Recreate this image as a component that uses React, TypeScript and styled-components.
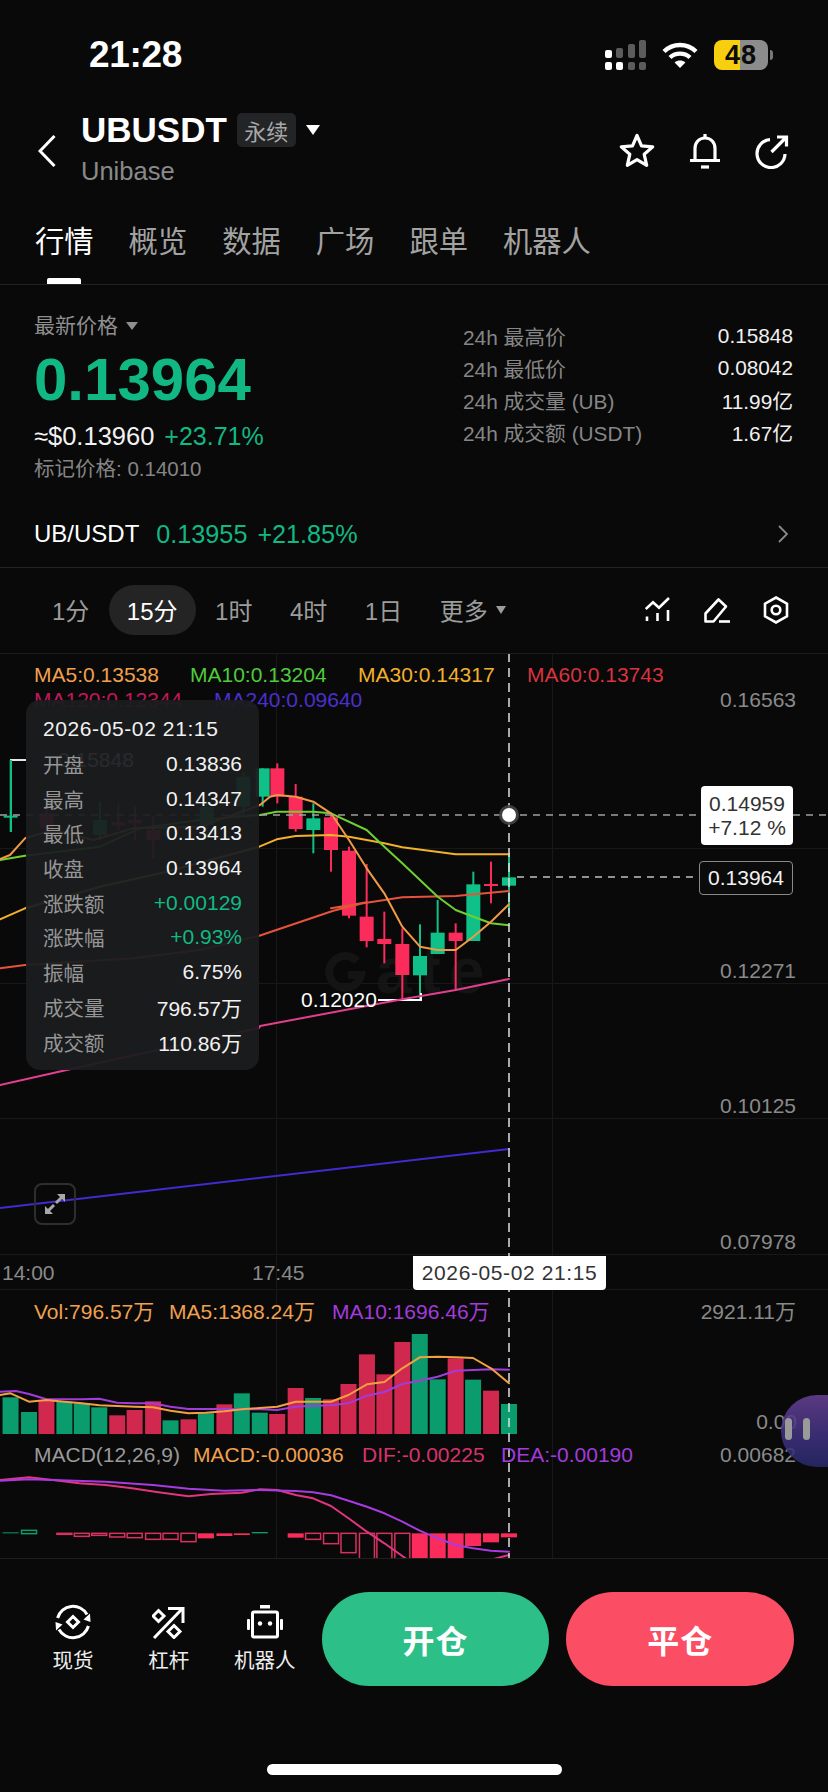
import React from "react";
import styled, { createGlobalStyle } from "styled-components";

const FONT = `"Liberation Sans", "Noto Sans CJK SC", sans-serif`;
const GREEN = "#12b883";
const GRAY = "#8f8f8f";

const Global = createGlobalStyle`
  html, body { margin: 0; padding: 0; background: #090909; }
  * { box-sizing: border-box; }
`;

const Page = styled.div`
  width: 828px; height: 1792px; background: #090909; color: #fff;
  font-family: ${FONT}; display: flex; flex-direction: column; overflow: hidden;
`;

/* status bar */
const StatusBar = styled.div`
  height: 100px; padding: 10px 55px 0 89px; display: flex; align-items: center; justify-content: space-between;
`;
const Clock = styled.div`font-size: 37px; font-weight: 700; letter-spacing: -0.3px; line-height: 40px;`;
const StatusIcons = styled.div`display: flex; align-items: center; gap: 16px;`;
const Battery = styled.div`
  position: relative; width: 54px; height: 30px; border-radius: 8px; overflow: hidden;
  background: linear-gradient(90deg, #f7cf0f 0 48%, #8c8c8c 48% 100%);
  color: #0b0b0b; font-size: 27px; font-weight: 700; display: flex; align-items: center; justify-content: center;
  line-height: 30px; letter-spacing: 1px;
`;
const BatteryWrap = styled.div`display: flex; align-items: center; gap: 2px;`;
const BatteryCap = styled.div`width: 3px; height: 10px; border-radius: 0 3px 3px 0; background: #777;`;

/* header */
const Header = styled.div`
  height: 100px; padding: 10px 38px 8px 38px; display: flex; align-items: center;
`;
const TitleCol = styled.div`margin-left: 25px; display: flex; flex-direction: column; flex: 1;`;
const TitleRow = styled.div`height: 40px; display: flex; align-items: center;`;
const Symbol = styled.div`font-size: 35px; font-weight: 700; line-height: 40px;`;
const Tag = styled.div`
  margin-left: 10px; width: 59px; height: 34px; border-radius: 5px; background: #232426; color: #a8a8a8;
  font-size: 22px; display: flex; align-items: center; justify-content: center;
`;
const Caret = styled.div<{ $w: number; $h: number; $c: string; $ml: number }>`
  margin-left: ${p => p.$ml}px; width: 0; height: 0; flex: none;
  border-left: ${p => p.$w / 2}px solid transparent; border-right: ${p => p.$w / 2}px solid transparent;
  border-top: ${p => p.$h}px solid ${p => p.$c};
`;
const SubName = styled.div`font-size: 25.5px; color: #8a8a8a; height: 42px; line-height: 42px;`;
const HeaderIcons = styled.div`display: flex; align-items: center; gap: 33.5px;`;

/* tabs */
const Tabs = styled.div`
  height: 85px; padding: 21px 0 0 35px; display: flex; gap: 35px; align-items: flex-start;
  border-bottom: 1px solid #222;
`;
const Tab = styled.div<{ $active?: boolean }>`
  position: relative; height: 63px; font-size: 29.3px; line-height: 42px;
  color: ${p => (p.$active ? "#fff" : "#a2a2a2")};
  ${p => p.$active ? `&::after { content: ""; position: absolute; left: 12px; bottom: 0; width: 34px; height: 6px; background: #fff; border-radius: 2px 2px 0 0; }` : ""}
`;

/* price */
const PriceSection = styled.div`height: 216px; display: flex; justify-content: space-between;`;
const PriceLeft = styled.div`padding: 29px 0 0 34px; display: flex; flex-direction: column;`;
const PriceKind = styled.div`height: 24px; font-size: 21px; line-height: 24px; color: ${GRAY}; display: flex; align-items: center;`;
const LastPrice = styled.div`margin-top: 12px; font-size: 60px; font-weight: 700; line-height: 60px; color: ${GREEN};`;
const UsdRow = styled.div`margin-top: 11px; height: 30px; line-height: 30px; font-size: 25.5px; display: flex; gap: 10px; color: #f2f2f2;`;
const UsdChange = styled.span`color: ${GREEN}; font-size: 25px;`;
const MarkPrice = styled.div`margin-top: 6px; height: 24px; line-height: 24px; font-size: 20.5px; color: #858585;`;
const Stats = styled.div`padding: 35px 35px 0 0; margin-left: auto; width: 365px;`;
const StatRow = styled.div`height: 32px; display: flex; justify-content: space-between; align-items: center; font-size: 20.8px;`;
const StatLabel = styled.span`color: #868686;`;
const StatValue = styled.span`color: #f0f0f0;`;

/* spot row */
const SpotRow = styled.div`
  height: 67px; padding: 0 40px 0 34px; display: flex; align-items: center; border-bottom: 1px solid #222; font-size: 24px;
`;
const SpotName = styled.span`color: #fff;`;
const SpotValue = styled.span`color: ${GREEN}; margin-left: 17px; font-size: 25.2px;`;
const SpotChange = styled.span`color: ${GREEN}; margin-left: 10px; flex: 1; font-size: 25.2px;`;

/* timeframe */
const TimeRow = styled.div`height: 85px; padding: 0 39px 2px 34px; display: flex; align-items: center; gap: 1.5px;`;
const TimeItem = styled.div<{ $active?: boolean }>`
  height: 50px; padding: 0 18px; border-radius: 25px; display: flex; align-items: center; font-size: 24px;
  color: ${p => (p.$active ? "#fff" : "#9c9c9c")}; background: ${p => (p.$active ? "#242424" : "transparent")};
`;
const TimeTools = styled.div`margin-left: auto; display: flex; align-items: center; gap: 33px;`;

/* chart */
const Chart = styled.div`position: relative; height: 905px; border-top: 1px solid #1c1c1c; overflow: hidden;`;
const ChartSvg = styled.svg`position: absolute; left: 0; top: -1px; display: block;`;
const Label = styled.div.attrs<{ $x?: number; $r?: number; $cy: number }>(p => ({
  style: {
    left: p.$x !== undefined ? p.$x : undefined,
    right: p.$r !== undefined ? p.$r : undefined,
    top: p.$cy - 654,
  },
}))<{ $x?: number; $r?: number; $cy: number; $c?: string }>`
  position: absolute; transform: translateY(-50%); white-space: nowrap; line-height: 1.2;
  color: ${p => p.$c || "#8a8a8a"}; font-size: 21px;
`;
const Tooltip = styled.div`
  position: absolute; left: 26px; top: 46px; width: 233px; height: 370px; padding: 12px 17px 11px 17px;
  background: rgba(27, 29, 31, 0.94); border-radius: 14px; display: flex; flex-direction: column;
`;
const TipRow = styled.div`height: 34.7px; flex: none; display: flex; align-items: center; justify-content: space-between; font-size: 21px; color: #f2f2f2;`;
const TipDate = styled(TipRow)`letter-spacing: 0.6px;`;
const TipLabel = styled.span`color: #969696; font-size: 20.5px;`;
const TipValue = styled.span<{ $up?: boolean }>`color: ${p => (p.$up ? GREEN : "#f2f2f2")};`;
const PriceTag = styled.div`
  position: absolute; left: 701px; top: 132px; width: 92px; height: 59px; background: #fff; border-radius: 4px; color: #333;
  font-size: 21px; line-height: 23.5px; text-align: center; padding-top: 6px;
`;
const LastTag = styled.div`
  position: absolute; left: 699px; top: 207px; width: 94px; height: 34px; background: #0b0b0b; border: 1px solid #8a8a8a;
  border-radius: 4px; font-size: 21px; line-height: 32px; text-align: center; color: #f2f2f2;
`;
const DateTag = styled.div`
  position: absolute; left: 413px; top: 602px; width: 193px; height: 34px; background: #fff; border-radius: 0 0 4px 4px;
  color: #333; font-size: 21px; line-height: 34px; text-align: center; letter-spacing: 0.6px;
`;
const ExpandBtn = styled.div`
  position: absolute; left: 34px; top: 529px; width: 42px; height: 42px; border: 2px solid #2e2e2e; border-radius: 8px;
  display: flex; align-items: center; justify-content: center;
`;
const Watermark = styled.div`
  position: absolute; left: 376px; top: 282px; font-size: 64px; font-weight: 700; line-height: 70px; color: #141414; letter-spacing: 8px;
`;
const FloatBall = styled.div`
  position: absolute; left: 781px; top: 741px; width: 47px; height: 72px; border-radius: 36px 0 0 36px;
  background: linear-gradient(180deg, rgba(104, 66, 150, 0.85) 0%, rgba(66, 50, 130, 0.85) 55%, rgba(40, 42, 110, 0.85) 100%);
  display: flex; gap: 11px; padding: 23px 0 0 4px;
`;
const PauseBar = styled.div`width: 7px; height: 22px; border-radius: 4px; background: #9a9a9a;`;

/* bottom */
const Bottom = styled.div`flex: 1; border-top: 1px solid #1f1f1f; padding-top: 33px; display: flex; flex-direction: column; align-items: center;`;
const BottomRow = styled.div`width: 100%; height: 94px; padding: 0 34px 0 25px; display: flex; align-items: center;`;
const NavItem = styled.div`width: 96px; display: flex; flex-direction: column; align-items: center; font-size: 20.5px; color: #eee; gap: 4px;`;
const NavIcon = styled.div`height: 36px; display: flex; align-items: center; justify-content: center;`;
const TradeButton = styled.div<{ $bg: string; $ml: number }>`
  width: 228px; height: 94px; border-radius: 47px; background: ${p => p.$bg}; color: #fff;
  font-size: 32px; font-weight: 700; display: flex; align-items: center; justify-content: center; letter-spacing: 1px;
  margin-left: ${p => p.$ml}px;
`;
const HomeBar = styled.div`margin-top: 78px; width: 295px; height: 11px; border-radius: 6px; background: #fff;`;

type P = [number, number];
const z3 = ([x, y]: P): P => [x / 3, 650 + y / 3];
const z4 = ([x, y]: P): P => [x / 3 + 260, 740 + y / 3];
const z5 = ([x, y]: P): P => [x / 1.894, 1260 + y / 3];
const pts = (a: P[]) => a.map(p => `${p[0].toFixed(1)},${p[1].toFixed(1)}`).join(" ");

const lines: { c: string; p: P[] }[] = [
  { c: "#3f2bd0", p: [[0, 1208], [509, 1149]] },
  { c: "#e23f8f", p: [...([[0, 1305], [190, 1262], [778, 1133]] as P[]).map(z3), ...([[0, 858], [427, 778], [587, 750], [747, 717]] as P[]).map(z4)] },
  { c: "#e5533c", p: [...([[0, 955], [75, 945], [400, 925], [600, 900], [778, 857], [1000, 782], [1100, 757]] as P[]).map(z3), ...([[213, 505], [320, 488], [427, 472], [587, 468], [747, 453]] as P[]).map(z4)] },
  { c: "#f2b02c", p: [...([[0, 808], [75, 775], [300, 710], [500, 665], [778, 590]] as P[]).map(z3), ...([[50, 298], [107, 288], [213, 285], [267, 290], [373, 310], [427, 322], [587, 343], [747, 343]] as P[]).map(z4)] },
  { c: "#6fd032", p: [...([[0, 630], [75, 617], [300, 590], [420, 535], [600, 510], [780, 495]] as P[]).map(z3), ...([[50, 215], [160, 215], [213, 220], [320, 270], [373, 320], [427, 370], [533, 470], [587, 510], [640, 530], [693, 550], [747, 556]] as P[]).map(z4)] },
  { c: "#f09a45", p: [...([[0, 627], [30, 615], [75, 565], [160, 540], [280, 570], [400, 535], [600, 530], [780, 465], [810, 440]] as P[]).map(z3), ...([[52, 165], [107, 170], [160, 185], [213, 220], [267, 300], [320, 385], [373, 460], [427, 560], [480, 620], [533, 630], [587, 630], [640, 590], [693, 545], [747, 493]] as P[]).map(z4)] },
];

type C = { x: number; h: number; l: number; t: number; b: number; g?: boolean };
const candles: C[] = [
  { x: 8, h: 85, l: 200, t: 85, b: 170, g: true },
  { x: 52, h: 70, l: 190, t: 85, b: 170 },
  { x: 107, h: 132, l: 275, t: 170, b: 267 },
  { x: 160, h: 190, l: 340, t: 235, b: 270, g: true },
  { x: 213, h: 225, l: 395, t: 232, b: 330 },
  { x: 267, h: 320, l: 535, t: 332, b: 527 },
  { x: 320, h: 372, l: 622, t: 530, b: 603 },
  { x: 373, h: 515, l: 670, t: 597, b: 612 },
  { x: 427, h: 565, l: 778, t: 612, b: 705 },
  { x: 480, h: 553, l: 780, t: 648, b: 706, g: true },
  { x: 533, h: 480, l: 640, t: 578, b: 642, g: true },
  { x: 587, h: 550, l: 750, t: 578, b: 603 },
  { x: 640, h: 395, l: 603, t: 433, b: 603, g: true },
  { x: 693, h: 365, l: 490, t: 432, b: 438 },
  { x: 747, h: 340, l: 520, t: 412, b: 437, g: true },
];
const hiddenCandles: C[] = [
  { x: 32, h: 330, l: 545, t: 497, b: 503, g: true },
  { x: 140, h: 470, l: 570, t: 490, b: 535 },
  { x: 300, h: 455, l: 570, t: 510, b: 555, g: true },
  { x: 355, h: 460, l: 540, t: 517, b: 527 },
  { x: 405, h: 470, l: 570, t: 510, b: 520 },
  { x: 460, h: 500, l: 625, t: 540, b: 570 },
  { x: 620, h: 450, l: 560, t: 470, b: 525, g: true },
  { x: 730, h: 365, l: 500, t: 380, b: 470, g: true },
];

const volBars: [number, number, boolean][] = [
  [20, 412, true], [55, 456, true], [88, 420, false], [122, 425, true], [155, 430, true], [188, 442, true], [222, 466, false], [255, 450, false],
  [290, 424, false], [323, 481, true], [357, 478, false], [390, 460, true], [425, 433, false], [458, 400, true], [492, 458, true], [525, 462, false],
  [560, 384, false], [593, 414, true], [627, 418, false], [660, 372, false], [695, 283, false], [728, 343, false], [762, 246, false], [795, 222, true],
  [829, 358, true], [863, 295, false], [896, 359, true], [930, 392, false], [964, 432, true],
];
const volMa5: P[] = [[0, 405], [20, 400], [55, 425], [88, 420], [122, 425], [155, 430], [188, 436], [222, 438], [255, 440], [290, 442], [323, 452], [357, 460], [390, 458], [425, 454], [458, 448], [492, 444], [525, 440], [560, 425], [593, 425], [627, 425], [660, 405], [695, 373], [728, 366], [762, 325], [795, 292], [829, 290], [863, 292], [896, 294], [930, 325], [964, 370]];
const volMa10: P[] = [[0, 395], [30, 393], [55, 402], [88, 418], [122, 418], [155, 418], [188, 416], [222, 428], [255, 430], [290, 430], [323, 440], [357, 447], [390, 447], [425, 447], [458, 448], [492, 448], [525, 450], [560, 440], [593, 437], [627, 436], [660, 430], [695, 407], [728, 396], [762, 372], [795, 362], [829, 350], [863, 332], [896, 330], [930, 328], [964, 329]];
const dif: P[] = [[0, 660], [55, 652], [100, 660], [150, 670], [200, 675], [250, 685], [300, 697], [357, 709], [400, 702], [458, 698], [492, 688], [525, 690], [560, 705], [593, 715], [627, 738], [660, 775], [695, 815], [728, 850], [770, 897]];
const dea: P[] = [[0, 662], [55, 658], [100, 660], [200, 665], [290, 675], [357, 686], [425, 692], [492, 690], [560, 693], [593, 697], [627, 706], [660, 722], [695, 740], [728, 760], [762, 785], [795, 812], [829, 835], [863, 855], [896, 865], [930, 872], [964, 875]];
const hist: [number, number, number, "g" | "gh" | "r" | "h"][] = [
  [20, 817, 820, "g"], [55, 811, 821, "gh"], [122, 820, 823, "h"], [155, 820, 829, "h"], [188, 820, 826, "h"], [222, 820, 831, "h"], [255, 820, 833, "h"],
  [290, 820, 838, "h"], [323, 820, 838, "h"], [357, 820, 845, "h"], [390, 820, 835, "r"], [425, 820, 828, "r"], [458, 820, 825, "r"], [492, 816, 820, "g"],
  [560, 820, 833, "r"], [593, 820, 838, "h"], [627, 820, 851, "h"], [660, 820, 878, "h"], [695, 820, 905, "h"], [728, 820, 905, "h"], [762, 820, 905, "h"],
  [795, 820, 905, "r"], [829, 820, 905, "r"], [863, 820, 905, "r"], [896, 820, 858, "r"], [930, 820, 847, "r"], [964, 820, 832, "r"],
];

const drawCandle = (c: C, m: (p: P) => P, w: number, k: string) => {
  const [x, h] = m([c.x, c.h]);
  const [, l] = m([c.x, c.l]);
  const [, t] = m([c.x, c.t]);
  const [, b] = m([c.x, c.b]);
  const col = c.g ? "#0fc088" : "#fb2c5c";
  return (
    <g key={k}>
      <rect x={x - 1} y={h} width={2} height={l - h} fill={col} />
      <rect x={x - w / 2} y={t} width={w} height={Math.max(b - t, 2)} fill={col} />
    </g>
  );
};

const Line = ({ p, c, w = 2 }: { p: P[]; c: string; w?: number }) => (
  <polyline points={pts(p)} fill="none" stroke={c} strokeWidth={w} strokeLinejoin="round" strokeLinecap="round" />
);

const ChartDrawing = () => (
  <ChartSvg width={828} height={906} viewBox="0 653 828 906">
    {[848, 983, 1118, 1254, 1289].map(y => <line key={y} x1={0} x2={828} y1={y + 0.5} y2={y + 0.5} stroke="#181818" strokeWidth={1} />)}
    {[276, 552].map(x => <line key={x} x1={x + 0.5} x2={x + 0.5} y1={653} y2={1558} stroke="#181818" strokeWidth={1} />)}
    {/* logo mark of the watermark */}
    <path d="M357 961A16 16 0 1 0 361 975H348" fill="none" stroke="#141414" strokeWidth={8} />
    {hiddenCandles.map((c, i) => drawCandle(c, z3, 14, `h${i}`))}
    {candles.map((c, i) => drawCandle(c, z4, 14, `c${i}`))}
    <path d="M26 760H11V832" fill="none" stroke="#fff" strokeWidth={2} opacity={0.9} />
    <rect x={10} y={760} width={2} height={72} fill="#0fc088" />
    <path d="M378 1000H421V993" fill="none" stroke="#fff" strokeWidth={2} />
    {lines.map((l, i) => <Line key={i} p={l.p} c={l.c} />)}
    <line x1={0} x2={828} y1={815} y2={815} stroke="#a0a0a0" strokeWidth={1.5} strokeDasharray="7 6" />
    <line x1={517} x2={699} y1={877} y2={877} stroke="#c0c0c0" strokeWidth={1.5} strokeDasharray="7 6" />
    {/* volume */}
    {volBars.map(([x, y, g]) => {
      const [px, py] = z5([x, y]);
      return <rect key={x} x={px - 8} y={py} width={16} height={1434 - py} fill={g ? "#0b9c6d" : "#d0284f"} />;
    })}
    <Line p={volMa10.map(z5)} c="#a23bdc" />
    <Line p={volMa5.map(z5)} c="#f4a040" />
    {/* macd */}
    {hist.map(([x, a, b, k]) => {
      const [px, y1] = z5([x, a]);
      const [, y2] = z5([x, b]);
      if (k === "h" || k === "gh") {
        return <rect key={x} x={px - 7.5} y={y1} width={15} height={y2 - y1} fill="none" stroke={k === "h" ? "#d63260" : "#0b9c6d"} strokeWidth={1.5} />;
      }
      return <rect key={x} x={px - 8} y={y1} width={16} height={y2 - y1} fill={k === "g" ? "#0b9c6d" : "#fb2c5c"} />;
    })}
    <Line p={dif.map(z5)} c="#e0357f" />
    <Line p={([[935, 897], [964, 885]] as P[]).map(z5)} c="#e0357f" />
    <Line p={dea.map(z5)} c="#a83ae0" />
    <line x1={509} x2={509} y1={653} y2={1558} stroke="#e0e0e0" strokeWidth={1.5} strokeDasharray="9 6" />
    <circle cx={509} cy={815} r={10} fill="#444" opacity={0.9} />
    <circle cx={509} cy={815} r={7} fill="#fff" />
  </ChartSvg>
);

const Signal = () => (
  <svg width={42} height={30} viewBox="0 0 42 30">
    {[[1, 10, "#fff"], [12, 8, "#5c5c5c"], [24, 4, "#5c5c5c"], [35, 0, "#5c5c5c"]].map(([x, y, c]) => (
      <rect key={x as number} x={x as number} y={y as number} width={7} height={18 - (y as number)} rx={2} fill={c as string} />
    ))}
    {[[1, "#fff"], [12, "#fff"], [24, "#5c5c5c"], [35, "#5c5c5c"]].map(([x, c]) => (
      <rect key={x as number} x={x as number} y={22} width={7} height={8} rx={2} fill={c as string} />
    ))}
  </svg>
);
const Wifi = () => (
  <svg width={36} height={28} viewBox="0 0 36 28" fill="none" stroke="#fff" strokeWidth={4.4}>
    <path d="M2 10.5C11 1.8 25 1.8 34 10.5" />
    <path d="M8 16.5C13.6 11.3 22.4 11.3 28 16.5" />
    <path d="M18 27L12.6 21.4C15.8 18.9 20.2 18.9 23.4 21.4Z" fill="#fff" stroke="none" />
  </svg>
);
const Back = () => (
  <svg width={18} height={32} viewBox="0 0 18 32" fill="none" stroke="#fff" strokeWidth={3}><path d="M16.5 1L2 16L16.5 31" /></svg>
);
const StarIcon = () => (
  <svg width={36} height={36} viewBox="0 0 36 36" fill="none" stroke="#fff" strokeWidth={3.2} strokeLinejoin="round">
    <path d="M18 2.5L22.5 12.9L33.7 13.9L25.2 21.3L27.7 32.3L18 26.6L8.3 32.3L10.8 21.3L2.3 13.9L13.5 12.9Z" />
  </svg>
);
const BellIcon = () => (
  <svg width={32} height={36} viewBox="0 0 32 36" fill="none" stroke="#fff" strokeWidth={3.2}>
    <path d="M6 27V15.5C6 9.5 10 5 16 5C22 5 26 9.5 26 15.5V27" />
    <path d="M1 27.5H31M16 1V5" />
    <path d="M12 34H20" />
  </svg>
);
const ShareIcon = () => (
  <svg width={36} height={36} viewBox="0 0 36 36" fill="none" stroke="#fff" strokeWidth={3.2}>
    <path d="M16 6.6A14 14 0 1 0 31 21" />
    <path d="M17.5 19L32 4.5M23 4H32.5V13.5" />
  </svg>
);
const Indicators = () => (
  <svg width={26} height={26} viewBox="0 0 26 26" fill="none" stroke="#fff" strokeWidth={2.6}>
    <path d="M0.7 12L8 5.3L14 10.7L24 1" />
    <path d="M2 19.5V24M12.5 16V24M23 13V24" />
  </svg>
);
const Pen = () => (
  <svg width={26} height={26} viewBox="0 0 26 26" fill="none" stroke="#fff" strokeWidth={2.6} strokeLinejoin="round">
    <path d="M1.5 24.5V16.5L14.5 2.5L22 9.5L9.5 24.5Z" />
    <path d="M15 24.5H26" />
  </svg>
);
const Hexa = () => (
  <svg width={26} height={28} viewBox="0 0 26 28" fill="none" stroke="#fff" strokeWidth={2.6}>
    <path d="M13 1.5L24 7.7V20.3L13 26.5L2 20.3V7.7Z" />
    <circle cx={13} cy={14} r={4.3} />
  </svg>
);
const Chevron = () => (
  <svg width={10} height={18} viewBox="0 0 10 18" fill="none" stroke="#8a8a8a" strokeWidth={1.8}><path d="M1 1L9 9L1 17" /></svg>
);
const Expand = () => (
  <svg width={24} height={24} viewBox="0 0 24 24" fill="none">
    <path d="M13 11L19 5" stroke="#a8a8a8" strokeWidth={3} />
    <path d="M14 2H22V10Z" fill="#a8a8a8" />
    <path d="M11 13L5 19" stroke="#a8a8a8" strokeWidth={3} />
    <path d="M2 14V22H10Z" fill="#a8a8a8" />
  </svg>
);
const SpotIcon = () => (
  <svg width={36} height={36} viewBox="0 0 36 36" fill="none" stroke="#fff" strokeWidth={3}>
    <path d="M2.6 14A16 16 0 0 1 32 10.5" />
    <path d="M28.5 15.5L35.5 18L35 9.5Z" fill="#fff" stroke="none" />
    <path d="M33.4 22A16 16 0 0 1 4 25.5" />
    <path d="M7.5 20.5L0.5 18L1 26.5Z" fill="#fff" stroke="none" />
    <path d="M18 12.5L23.5 18L18 23.5L12.5 18Z" />
  </svg>
);
const LeverIcon = () => (
  <svg width={33} height={33} viewBox="0 0 33 33" fill="none" stroke="#fff" strokeWidth={3}>
    <path d="M2 32L30 3" />
    <path d="M16 2.5H31V17" />
    <path d="M6.5 4.5L12 10L6.5 15.5L1 10Z" />
    <path d="M22 19.5L28 25.5L22 31.5L16 25.5Z" />
  </svg>
);
const RobotIcon = () => (
  <svg width={36} height={34} viewBox="0 0 36 34">
    <rect x={13} y={0} width={10} height={3.5} fill="#fff" />
    <rect x={5.5} y={7} width={25} height={25} rx={1.5} fill="none" stroke="#fff" strokeWidth={3} />
    <rect x={0} y={14} width={3} height={11} rx={1} fill="#fff" />
    <rect x={33} y={14} width={3} height={11} rx={1} fill="#fff" />
    <circle cx={13} cy={18.5} r={2.2} fill="#fff" />
    <circle cx={23} cy={18.5} r={2.2} fill="#fff" />
  </svg>
);

const tabs = ["行情", "概览", "数据", "广场", "跟单", "机器人"];
const stats = [
  ["24h 最高价", "0.15848"],
  ["24h 最低价", "0.08042"],
  ["24h 成交量 (UB)", "11.99亿"],
  ["24h 成交额 (USDT)", "1.67亿"],
];
const tips: [string, string, boolean?][] = [
  ["开盘", "0.13836"], ["最高", "0.14347"], ["最低", "0.13413"], ["收盘", "0.13964"],
  ["涨跌额", "+0.00129", true], ["涨跌幅", "+0.93%", true], ["振幅", "6.75%"],
  ["成交量", "796.57万"], ["成交额", "110.86万"],
];
const legends: [number, number, string, string][] = [
  [34, 675, "#f0a04f", "MA5:0.13538"], [190, 675, "#4fcb3c", "MA10:0.13204"], [358, 675, "#f2b02c", "MA30:0.14317"], [527, 675, "#d8333f", "MA60:0.13743"],
  [34, 700, "#c2185b", "MA120:0.12344"], [214, 700, "#4a30cf", "MA240:0.09640"],
];

export default function App() {
  return (
    <Page>
      <Global />
      <StatusBar>
        <Clock>21:28</Clock>
        <StatusIcons>
          <Signal />
          <Wifi />
          <BatteryWrap><Battery>48</Battery><BatteryCap /></BatteryWrap>
        </StatusIcons>
      </StatusBar>
      <Header>
        <Back />
        <TitleCol>
          <TitleRow>
            <Symbol>UBUSDT</Symbol>
            <Tag>永续</Tag>
            <Caret $w={14} $h={10} $c="#fff" $ml={10} />
          </TitleRow>
          <SubName>Unibase</SubName>
        </TitleCol>
        <HeaderIcons><StarIcon /><BellIcon /><ShareIcon /></HeaderIcons>
      </Header>
      <Tabs>
        {tabs.map((t, i) => <Tab key={t} $active={i === 0}>{t}</Tab>)}
      </Tabs>
      <PriceSection>
        <PriceLeft>
          <PriceKind>最新价格<Caret $w={12} $h={8} $c="#8f8f8f" $ml={8} /></PriceKind>
          <LastPrice>0.13964</LastPrice>
          <UsdRow>≈$0.13960<UsdChange>+23.71%</UsdChange></UsdRow>
          <MarkPrice>标记价格: 0.14010</MarkPrice>
        </PriceLeft>
        <Stats>
          {stats.map(([a, b]) => (
            <StatRow key={a}><StatLabel>{a}</StatLabel><StatValue>{b}</StatValue></StatRow>
          ))}
        </Stats>
      </PriceSection>
      <SpotRow>
        <SpotName>UB/USDT</SpotName>
        <SpotValue>0.13955</SpotValue>
        <SpotChange>+21.85%</SpotChange>
        <Chevron />
      </SpotRow>
      <TimeRow>
        <TimeItem>1分</TimeItem>
        <TimeItem $active>15分</TimeItem>
        <TimeItem>1时</TimeItem>
        <TimeItem>4时</TimeItem>
        <TimeItem>1日</TimeItem>
        <TimeItem>更多<Caret $w={11} $h={8} $c="#9c9c9c" $ml={8} /></TimeItem>
        <TimeTools><Indicators /><Pen /><Hexa /></TimeTools>
      </TimeRow>
      <Chart>
        <Watermark>ate</Watermark>
        <ChartDrawing />
        {legends.map(([x, y, c, t]) => <Label key={t} $x={x} $cy={y} $c={c}>{t}</Label>)}
        <Label $x={58} $cy={760} $c="#ffffff">0.15848</Label>
        <Label $x={301} $cy={1000} $c="#ffffff">0.12020</Label>
        <Label $r={32} $cy={700}>0.16563</Label>
        <Label $r={32} $cy={971}>0.12271</Label>
        <Label $r={32} $cy={1106}>0.10125</Label>
        <Label $r={32} $cy={1242}>0.07978</Label>
        <Label $x={2} $cy={1273}>14:00</Label>
        <Label $x={252} $cy={1273}>17:45</Label>
        <Label $x={34} $cy={1312} $c="#f0a04f">Vol:796.57万</Label>
        <Label $x={169} $cy={1312} $c="#f0a04f">MA5:1368.24万</Label>
        <Label $x={332} $cy={1312} $c="#a23bdc">MA10:1696.46万</Label>
        <Label $r={32} $cy={1312}>2921.11万</Label>
        <Label $r={31} $cy={1422}>0.00</Label>
        <Label $x={34} $cy={1455} $c="#9a9a9a">MACD(12,26,9)</Label>
        <Label $x={193} $cy={1455} $c="#f0a04f">MACD:-0.00036</Label>
        <Label $x={362} $cy={1455} $c="#d6336c">DIF:-0.00225</Label>
        <Label $x={501} $cy={1455} $c="#a23bdc">DEA:-0.00190</Label>
        <Label $r={32} $cy={1455}>0.00682</Label>
        <Tooltip>
          <TipDate>2026-05-02 21:15</TipDate>
          {tips.map(([a, b, up]) => (
            <TipRow key={a}><TipLabel>{a}</TipLabel><TipValue $up={up}>{b}</TipValue></TipRow>
          ))}
        </Tooltip>
        <PriceTag>0.14959<br />+7.12 %</PriceTag>
        <LastTag>0.13964</LastTag>
        <DateTag>2026-05-02 21:15</DateTag>
        <ExpandBtn><Expand /></ExpandBtn>
        <FloatBall><PauseBar /><PauseBar /></FloatBall>
      </Chart>
      <Bottom>
        <BottomRow>
          <NavItem><NavIcon><SpotIcon /></NavIcon>现货</NavItem>
          <NavItem><NavIcon><LeverIcon /></NavIcon>杠杆</NavItem>
          <NavItem><NavIcon><RobotIcon /></NavIcon>机器人</NavItem>
          <TradeButton $bg="#2dbf88" $ml={9}>开仓</TradeButton>
          <TradeButton $bg="#fb4d63" $ml={17}>平仓</TradeButton>
        </BottomRow>
        <HomeBar />
      </Bottom>
    </Page>
  );
}
